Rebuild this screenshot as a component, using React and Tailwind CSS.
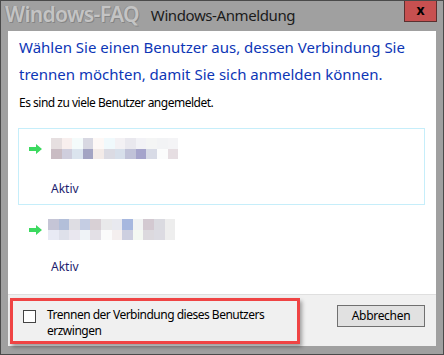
import React from "react";

const row1a = ["#e6dfe0","#f8efee","#f4fbfb","#d8d8e2","#fdf8f6","#f0f9fc","#f3f1f4","#e9e8ee","#f2f2f6","#f4f5f5","#f2f3f5","#f4f4f6"];
const row1b = ["#c9bcc3","#cfcedd","#dbe4ee","#a3a4c3","#f3ebe8","#dbdbe3","#d7dfea","#c0c2d8","#a5a4cb","#d8dbe6","#fbfcfc","#e6dee2"];
const row2a = ["#c5c5d6","#b3bfd9","#dedde3","#c5cde3","#d8d0d5","#e9e9ea","#e8e9ef","#a7b8df","#f1f3f3","#d3c9d1","#dadae0","#ededed"];
const row2b = ["#e8eaf4","#dee0ea","#e9e7ef","#eff3f7","#e3e0e6","#fbfbfb","#f4efef","#cdcfe0","#f4f8f2","#dcd9de","#dcdbe2","#eeeeee"];

function Pixels({ a, b }) {
  return (
    <div className="flex flex-col">
      <div className="flex">
        {a.map((c, i) => (
          <div key={i} className="w-[10.6px] h-[11px]" style={{ background: c }} />
        ))}
      </div>
      <div className="flex">
        {b.map((c, i) => (
          <div key={i} className="w-[10.6px] h-[10px]" style={{ background: c }} />
        ))}
      </div>
    </div>
  );
}

function Arrow() {
  return (
    <svg width="13" height="10" viewBox="0 0 13 10" className="shrink-0">
      <path d="M0 3 H7 V0 L13 5 L7 10 V7 H0 Z" fill="#3bd95f" />
    </svg>
  );
}

export default function App() {
  return (
    <div
      className="w-[444px] h-[355px] bg-[#a0a0a0] border border-[#4a4a4a] flex flex-col relative overflow-hidden"
      style={{ fontFamily: '"Noto Sans", "Open Sans", sans-serif' }}
    >
      <div className="h-[30px] flex items-center relative shrink-0">
        <div
          className="absolute left-[4px] top-[-2px] text-[21px] font-semibold text-[#c4c4c4] tracking-[-0.6px]"
          style={{ textShadow: "1px 1px 0 #858585, -1px 0 0 #8e8e8e" }}
        >
          Windows-FAQ
        </div>
        <div className="w-full text-center text-[15px] text-[#1b1b1b] tracking-[-0.4px] -mt-[1px] pl-[2px]">Windows-Anmeldung</div>
        <div className="absolute right-[6px] top-[-1px] w-[33px] h-[22px] bg-[#c75050] border border-[#5a3030] flex items-center justify-center">
          <span className="text-[14px] font-bold text-black leading-none -mt-[2px]">x</span>
        </div>
      </div>
      <div className="mx-[7px] h-[263px] bg-white flex flex-col shrink-0">
        <div className="pl-[11px] pt-[3px] text-[15px] leading-[27px] text-[#0d36b6]">
          Wählen Sie einen Benutzer aus, dessen Verbindung Sie
          <br />
          trennen möchten, damit Sie sich anmelden können.
        </div>
        <div className="pl-[11px] mt-[7px] text-[12px] tracking-[-0.5px] text-black leading-[16px]">
          Es sind zu viele Benutzer angemeldet.
        </div>
        <div className="mt-[17px] flex flex-col gap-[1px]">
          <div className="ml-[10px] mr-[11px] h-[77px] border border-[#c6eefa] flex flex-col pl-[10px]">
            <div className="flex items-center gap-[9px] mt-[9px]">
              <Arrow />
              <Pixels a={row1a} b={row1b} />
            </div>
            <div className="mt-[22px] pl-[22px] text-[12px] text-[#1d1d6e] leading-[16px]">Aktiv</div>
          </div>
          <div className="ml-[10px] mr-[11px] h-[77px] border border-transparent flex flex-col pl-[10px]">
            <div className="flex items-center gap-[6px] mt-[12px]">
              <Arrow />
              <Pixels a={row2a} b={row2b} />
            </div>
            <div className="mt-[19px] pl-[22px] text-[12px] text-[#1d1d6e] leading-[16px]">Aktiv</div>
          </div>
        </div>
      </div>
      <div className="mx-[7px] h-[52px] bg-[#f0f0f0] border-t border-[#dfdfdf] flex items-start shrink-0">
        <div
          className="ml-[2px] mt-[3px] w-[290px] h-[46px] border-[3px] border-[#ef4444] flex items-start pl-[10px] pt-[6px]"
          style={{ boxShadow: "2px 3px 4px rgba(0,0,0,0.35)" }}
        >
          <div className="w-[13px] h-[13px] border border-[#444] bg-white mt-[3px] shrink-0" />
          <div className="ml-[11px] text-[12px] leading-[16px] tracking-[-0.5px] text-black">
            Trennen der Verbindung dieses Benutzers
            <br />
            erzwingen
          </div>
        </div>
        <div className="ml-auto mr-[11px] mt-[10px] w-[88px] h-[22px] bg-[#e1e1e1] border border-[#707070] flex items-center justify-center text-[12px] tracking-[-0.3px] text-black">
          Abbrechen
        </div>
      </div>
    </div>
  );
}
